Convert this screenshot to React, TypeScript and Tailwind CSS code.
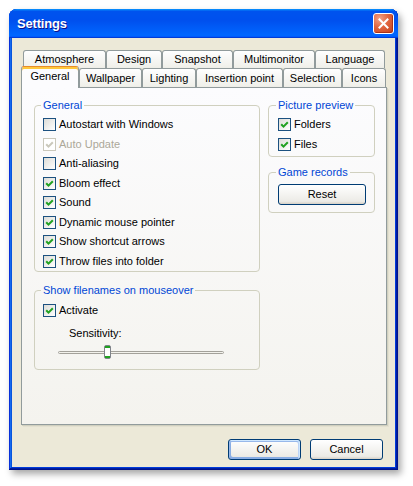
import React from 'react';

type CheckProps = { checked?: boolean; disabled?: boolean };

const Check: React.FC<CheckProps> = ({ checked, disabled }) => (
  <span
    className={`flex h-[13px] w-[13px] shrink-0 items-center justify-center border ${
      disabled ? 'border-[#cac8bb] bg-white' : 'border-[#1c5180] bg-[linear-gradient(135deg,#dcdcd7,#ffffff)]'
    }`}
  >
    {checked && (
      <svg width="9" height="9" viewBox="0 0 9 9">
        <path d="M1.2 4.2 L3.5 6.6 L7.8 2.2" fill="none" stroke={disabled ? '#cac8bb' : '#21a121'} strokeWidth="2" />
      </svg>
    )}
  </span>
);

const CheckRow: React.FC<CheckProps & { label: string }> = ({ label, checked, disabled }) => (
  <div className="flex h-[19.5px] items-center gap-[3px]">
    <Check checked={checked} disabled={disabled} />
    <span className={`text-[11px] leading-[13px] ${disabled ? 'text-[#aca899]' : 'text-black'}`}>{label}</span>
  </div>
);

const GroupBox: React.FC<{ title: string; className?: string; children: React.ReactNode }> = ({ title, className, children }) => (
  <fieldset className={`rounded-[4px] border border-[#d0d0bf] ${className ?? ''}`}>
    <legend className="-ml-[2px] px-[2px] text-[11px] leading-[13px] text-[#0046d5]">{title}</legend>
    {children}
  </fieldset>
);

const Tab: React.FC<{ label: string; className: string; selected?: boolean }> = ({ label, className, selected }) =>
  selected ? (
    <div
      className={`relative z-10 -mb-px flex h-[22px] items-start justify-center rounded-t-[3px] border border-b-0 border-[#919b9c] border-t-[#e68b2c] bg-[#fcfcfe] pt-[2px] text-[11px] leading-[13px] shadow-[inset_0_2px_#ffc83c] ${className}`}
    >
      <span className="mt-[1px]">{label}</span>
    </div>
  ) : (
    <div
      className={`flex items-center justify-center rounded-t-[3px] border border-b-0 border-[#919b9c] bg-[linear-gradient(180deg,#ffffff,#fafaf9_26%,#f0f0ea_95%,#ecebe5)] text-[11px] leading-[13px] ${className}`}
    >
      {label}
    </div>
  );

const XpButton: React.FC<{ label: string; className: string; focused?: boolean }> = ({ label, className, focused }) => (
  <button
    className={`flex items-center justify-center rounded-[3px] border border-[#003c74] bg-[linear-gradient(180deg,#ffffff,#ecebe6_86%,#d6d0c5)] text-[11px] leading-[13px] text-black ${
      focused
        ? 'shadow-[inset_-1px_1px_#cee7ff,inset_1px_2px_#98b8ea,inset_-2px_2px_#bcd4f6,inset_1px_-1px_#89ade4,inset_2px_-2px_#89ade4]'
        : ''
    } ${className}`}
  >
    {label}
  </button>
);

export default function App() {
  return (
    <div className="h-[486px] w-[413px] bg-white pl-[9px] pt-[9px] font-['Liberation_Sans',Arial,sans-serif] text-black">
      <div className="flex h-[461px] w-[389px] flex-col rounded-t-[8px] bg-[#0855dd] shadow-[inset_-1px_-1px_#00138c,inset_1px_1px_#0831d9,inset_-2px_-2px_#001ea0,inset_2px_2px_#166aee,inset_-3px_-3px_#003bda,inset_3px_3px_#0855dd,3px_4px_7px_rgba(0,0,0,0.35)]">
        {/* title bar */}
        <div className="flex h-[29px] shrink-0 items-center justify-between rounded-t-[8px] bg-[linear-gradient(180deg,#0997ff,#0053ee_8%,#0050ee_40%,#0066ff_88%,#0066ff_93%,#005bff_95%,#003dd7_96%,#003dd7)] pl-[8px] pr-[4px]">
          <span className="text-[13px] font-bold tracking-[-0.2px] text-white [text-shadow:1px_1px_#0f1089]">Settings</span>
          <button className="flex h-[21px] w-[21px] items-center justify-center rounded-[3px] border border-white bg-[radial-gradient(circle_at_30%_25%,#f4a287,#e1653f_45%,#c2401b)] shadow-[inset_-1px_-1px_#a8321a]">
            <svg width="11" height="11" viewBox="0 0 11 11">
              <path d="M1.5 1.5 L9.5 9.5 M9.5 1.5 L1.5 9.5" stroke="white" strokeWidth="2" strokeLinecap="square" />
            </svg>
          </button>
        </div>

        {/* client area */}
        <div className="mx-[3px] mb-[3px] flex flex-1 flex-col bg-[#ece9d8] pl-[9px] pt-[12px]">
          <div className="w-[366px]">
            <div className="flex h-[18px] pl-[2px]">
              <Tab label="Atmosphere" className="w-[83px]" />
              <Tab label="Design" className="w-[56px]" />
              <Tab label="Snapshot" className="w-[71px]" />
              <Tab label="Multimonitor" className="w-[82px]" />
              <Tab label="Language" className="w-[70px]" />
            </div>
            <div className="flex h-[19px] items-end">
              <Tab label="General" className="w-[58px]" selected />
              <Tab label="Wallpaper" className="h-[19px] w-[63px]" />
              <Tab label="Lighting" className="h-[19px] w-[54px]" />
              <Tab label="Insertion point" className="h-[19px] w-[87px]" />
              <Tab label="Selection" className="h-[19px] w-[59px]" />
              <Tab label="Icons" className="h-[19px] w-[44px]" />
            </div>

            {/* panel */}
            <div className="h-[338px] border border-[#919b9c] bg-[linear-gradient(180deg,#fcfcfe,#f4f3ee)] pl-[12px] pt-[11px] shadow-[1px_1px_#d0d0bf,2px_2px_#e3e0d0]">
              <div className="flex gap-[8px]">
                <div className="flex w-[226px] flex-col">
                  <GroupBox title="General" className="pl-[8px] pt-[3px]">
                    <CheckRow label="Autostart with Windows" />
                    <CheckRow label="Auto Update" checked disabled />
                    <CheckRow label="Anti-aliasing" />
                    <CheckRow label="Bloom effect" checked />
                    <CheckRow label="Sound" checked />
                    <CheckRow label="Dynamic mouse pointer" checked />
                    <CheckRow label="Show shortcut arrows" checked />
                    <CheckRow label="Throw files into folder" checked />
                  </GroupBox>

                  <GroupBox title="Show filenames on mouseover" className="mt-[11.5px] pb-[10px] pl-[8px] pt-[4px]">
                    <CheckRow label="Activate" checked />
                    <div className="mt-[6.5px] pl-[26px] text-[11px] leading-[13px]">Sensitivity:</div>
                    <div className="relative ml-[15px] mt-[5.5px] flex h-[14px] w-[166px] items-center">
                      <div className="h-[3px] w-full rounded-full border border-[#a3a19a] bg-[#f3f2ec]" />
                      <div className="absolute left-[46px] top-0 flex h-[14px] w-[7px] flex-col justify-between rounded-[2px] border border-[#7f8389] bg-white">
                        <div className="h-[2px] bg-[#21a121]" />
                        <div className="h-[2px] bg-[#21a121]" />
                      </div>
                    </div>
                  </GroupBox>
                </div>

                <div className="flex w-[107px] flex-col">
                  <GroupBox title="Picture preview" className="pb-[2px] pl-[9px] pt-[3px]">
                    <CheckRow label="Folders" checked />
                    <CheckRow label="Files" checked />
                  </GroupBox>
                  <GroupBox title="Game records" className="mt-[9px] pb-[7px] pl-[9px] pt-[4.5px]">
                    <XpButton label="Reset" className="h-[21px] w-[88px]" />
                  </GroupBox>
                </div>
              </div>
            </div>
          </div>

          <div className="mt-[14px] flex justify-end gap-[9px] pr-[12px]">
            <XpButton label="OK" className="h-[21px] w-[73px]" focused />
            <XpButton label="Cancel" className="h-[21px] w-[73px]" />
          </div>
        </div>
      </div>
    </div>
  );
}
